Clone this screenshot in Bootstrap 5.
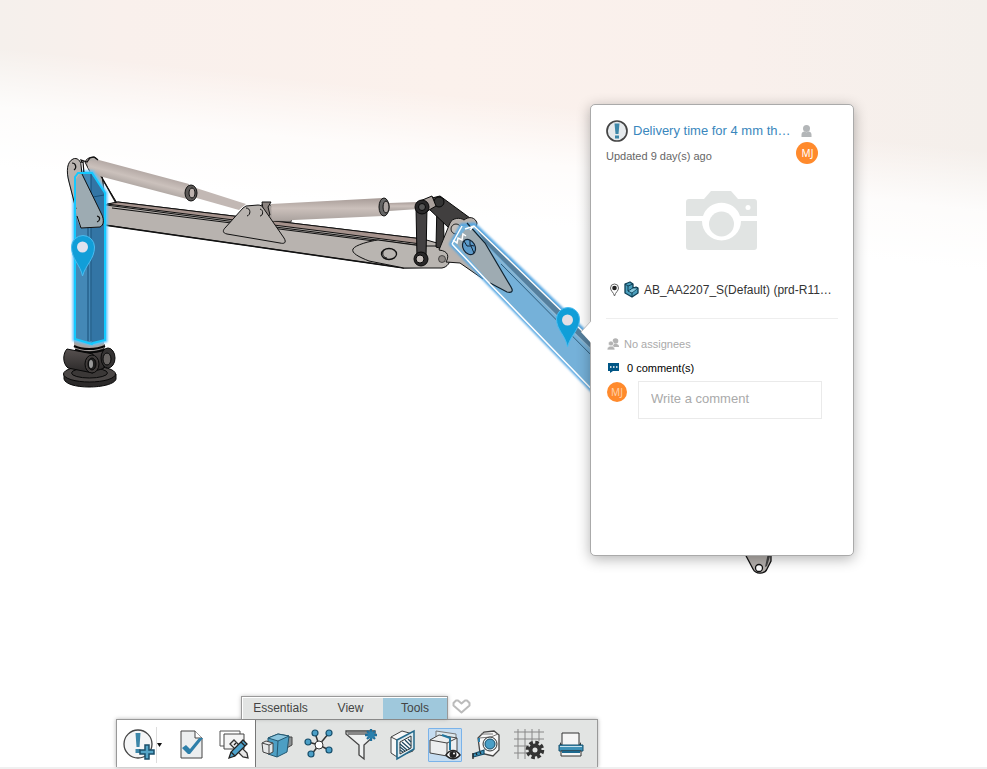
<!DOCTYPE html>
<html lang="en">
<head>
<meta charset="utf-8">
<meta name="viewport" content="width=device-width, initial-scale=1">
<title>Assembly review</title>
<link rel="stylesheet" href="https://cdn.jsdelivr.net/npm/bootstrap@5.3.0/dist/css/bootstrap.min.css">
<style>
  body { font-family: "Liberation Sans", Arial, sans-serif; font-size: 12px; line-height: 16px; color: #333; }
  .viewer { background: linear-gradient(186deg, transparent 150px, #fffc 210px, #fff 270px), linear-gradient(90deg, #f5f0ec 0, #f9f0ec 12%, #fbf1ec 45%, #f9f0ec 75%, #f4efeb 100%); overflow: hidden; }
  .scene { position: absolute; top: 0; left: 0; }
  svg { display: block; flex: none; }

  /* Issue pop-over, floating over the model */
  .issue { position: absolute; top: 104px; left: 590px; width: 264px; min-height: 452px; padding: 15px; border: 1px solid #aaa; border-radius: 5px; background: #fff; box-shadow: 0 3px 14px rgba(0,0,0,.3); }
  .issue-arrow { position: absolute; left: -11px; top: 215px; }
  .issue-title { font-size: 13px; color: #3a87bd; text-decoration: none; white-space: nowrap; }
  .people { width: 22px; margin-left: 6px; margin-right: 20px; padding-top: 4px; }
  .note { font-size: 11px; }
  .updated { margin-top: 6px; color: #666; }
  .avatar { width: 22px; height: 22px; background: #ff8a2c; color: #fff; font: 10px/22px "Noto Sans", sans-serif; text-align: center; }
  .avatar-sm { width: 20px; height: 20px; line-height: 20px; color: #ffd0a8; margin: 1px 11px 0 1px; }
  .photo { padding: 27px 0 31px; }
  .rule { width: 232px; border-top: 1px solid #eee; margin: 20px 0 17px; }
  .muted { color: #aaa; }
  .comment-box { width: 184px; height: 38px; padding: 0 12px 3px; border: 1px solid #eaeaea; border-radius: 0; font-size: 13px; color: #333; }
  .comment-box::placeholder { color: #aaa; }
  .comment-row { margin-top: 5px; }

  /* Action bar */
  .dock { padding-left: 116px; border-bottom: 2px solid #f0f0f0; }
  .tabs { margin-left: 125px; }
  .tab-set { border: 1px solid #999; border-bottom: 0; box-shadow: 0 0 4px rgba(0,0,0,.25); }
  .tab-set button { height: 22px; padding: 0 0 2px; border: 0; border-top: 1px solid #fff; background: #e2e4e3; color: #444; width: 65px; }
  .tab-set button:first-child { width: 76px; border-left: 1px solid #fff; }
  .tab-set button.active { width: 64px; background: #9fc8dc; }
  .fav { border: 0; background: none; padding: 0 0 2px 4px; }
  .tools { border: 1px solid #999; border-bottom: 0; height: 48px; width: 482px; background: #e2e4e3; box-shadow: 0 0 4px rgba(0,0,0,.3); }
  .tools > div { gap: 8px; padding: 2px 4px 0; }
  .tools .common { background: #fff; border-right: 1px solid #777; width: 139px; padding: 2px 3px 0 5px; }
  .tool { width: 34px; height: 34px; padding: 0; border: 1px solid transparent; border-radius: 1px; background: none; display: flex; align-items: center; justify-content: center; }
  .tool.active { background: #c5dcf0; border-color: #7ab3ea; }
  .more { width: 11px; height: 36px; padding: 0; border: 0; background: none; border-left: 1px solid #ddd; }
  .more svg { margin-left: -1px; }
</style>
<script src="https://cdn.jsdelivr.net/npm/bootstrap@5.3.0/dist/js/bootstrap.bundle.min.js"></script>
</head>
<body>
<main class="viewer position-relative min-vh-100 d-flex flex-column">

  <svg class="scene" width="987" height="600" viewBox="0 0 987 600" role="img" aria-label="Crane arm model">
    <defs>
      <linearGradient id="tube" x1="0" y1="0" x2="0" y2="1"><stop offset="0" stop-color="#a79b97"/><stop offset=".45" stop-color="#cbc0bb"/><stop offset="1" stop-color="#aaa29e"/></linearGradient>
      <linearGradient id="tubeA" gradientUnits="userSpaceOnUse" x1="147" y1="171" x2="142" y2="190"><stop offset="0" stop-color="#b0a5a1"/><stop offset=".5" stop-color="#cbc1bc"/><stop offset="1" stop-color="#a9a19d"/></linearGradient>
      <linearGradient id="base" x1="0" y1="0" x2="0" y2="1"><stop offset="0" stop-color="#575150"/><stop offset="1" stop-color="#292727"/></linearGradient>
      <filter id="glow" x="-20%" y="-20%" width="140%" height="140%"><feGaussianBlur stdDeviation="1.3"/></filter>
    </defs>

    <!-- pedestal -->
    <g stroke="#080808">
      <path d="M64 374v5c1 5 12 8 25 8s26-3 27-8v-5z" fill="#2c2a2a"/>
      <ellipse cx="89.500" cy="374" rx="26" ry="8" fill="#4b4746"/>
      <ellipse cx="89.500" cy="373" rx="18" ry="5" fill="#3b3837"/>
      <path d="M76 344h28v24c-8 4-20 4-28 0z" fill="url(#base)"/>
      <path d="M74 339l17 5 13-4v8c-8 4-22 4-30 0z" fill="#aaa5a3" stroke="none"/>
      <path d="M74 346c8 4 22 4 31 0M75 350c9 3 20 3 29 0" fill="none" stroke-width="2"/>
      <path d="M67 349l26 5v19l-25-5c-6-5-5-15-1-19z" fill="url(#base)"/>
      <ellipse cx="108" cy="358" rx="7" ry="10" fill="#343232"/><ellipse cx="107" cy="359" rx="4" ry="6" fill="#686462"/>
      <ellipse cx="92" cy="364" rx="7" ry="9" fill="#403c3b"/><ellipse cx="92" cy="364" rx="4" ry="6" fill="#1e1e1e"/><ellipse cx="91" cy="364" rx="2" ry="4" fill="#999" stroke="none"/>
    </g>

    <!-- main beam -->
    <g stroke="#111" stroke-linejoin="round">
      <path d="M103 180l14 23-14 4z" fill="#fff"/>
      <path d="M85 162c2-5 10-7 13-2l4 14 3 28z" fill="#b5afab"/>
      <path d="M105 205l13-3 305 37 21 6c8 7 8 18 0 22l-40 1-299-43z" fill="#b8b3af"/>
      <path d="M107 204l11-2 305 37-2 5-100-13-214-27z" fill="#a5928c"/>
      <path d="M106 205l130 17 188 24M112 208l310 39" fill="none"/>
      <path d="M104 225l300 43" fill="none" stroke-width="1.500"/>
      <path d="M422 246l-44-6c-8 1-23 5-25 9s6 8 16 12l35 7h38c11-2 11-18 2-22z" fill="#b9b5b1"/>
      <ellipse cx="389" cy="254" rx="7.500" ry="5.500" fill="#b9b5b1" stroke-width="1.300"/><path d="M384 250c-3 4 0 8 3 8" fill="none"/>
      <circle cx="442" cy="259" r="3.500" fill="#8e8986" stroke-width=".6"/>
      <path d="M101 176l15 27" fill="none" stroke-width="1.500"/>
    </g>

    <!-- cylinders -->
    <path d="M196 188l50 16-7 6-46-13z" fill="#c2b8b4"/>
    <path d="M88 161l11-1 90 24-2 15-88-23-11-8z" fill="url(#tubeA)"/>
    <g stroke="#111">
      <ellipse cx="191" cy="193" rx="6" ry="8" fill="#5c5957"/><ellipse cx="192" cy="193" rx="3" ry="5" fill="#bcb1ad"/>
      <path d="M261 205l8-2 5 7 18 8-1 4-33-2z" fill="#a69e9a" stroke-width=".7"/>
    </g>
    <path d="M389 203l30-1v7l-30 2z" fill="url(#tube)"/>
    <path d="M271 204l112-6v18l-111 5z" fill="url(#tube)"/>
    <g stroke="#111" stroke-linejoin="round">
      <ellipse cx="384" cy="207" rx="5" ry="9" fill="#666"/><ellipse cx="386" cy="207" rx="3" ry="6" fill="#aaa3a0"/>
      <path d="M262 202h9l-3 5 2 8-6 2z" fill="#8c8480"/>
      <path d="M246 206l12-1c3 0 4 1 6 4l20 29c3 5 0 6-4 5l-53-9c-5-1-4-4-2-6l18-20z" fill="#b8b3af"/>
      <path d="M246 208c5 0 5 7 1 8M260 209c4 1 3 7 0 7" fill="none"/>
    </g>

    <!-- linkage -->
    <g stroke="#080808">
      <path d="M437 202l-1 45 6 2 2-10-1-35z" fill="#3c3a3a"/>
      <path d="M432 198l8-2 30 22-7 9-14 1-21-20z" fill="#413f3f"/>
      <path d="M416 207h11l-1 51h-9z" fill="#434142"/>
      <circle cx="439" cy="202" r="5" fill="#333"/><path d="M420 201l12-5 4 10-12 7z" fill="#aaa19d"/>
      <circle cx="422" cy="207" r="7" fill="#292829"/><circle cx="422" cy="207" r="3.500" fill="#555"/>
      <circle cx="421" cy="259" r="7" fill="#292829"/><circle cx="420" cy="259" r="4" fill="#c7c0bc"/>
    </g>
    <path d="M439 250l11-27c2-5 10-6 14-3 5-4 11-3 13 3l-8 38 14 18-23-16-14-1c3-5 3-11-7-12z" fill="#b8b2ae" stroke="#111"/>
    <circle cx="456" cy="229" r="5" fill="#c4bfbb" stroke="#222"/>

    <!-- highlighted boom -->
    <path d="M452 244l10-18 12-1 130 126v51l-114-118z" fill="none" stroke="#55a6e2" stroke-width="5" filter="url(#glow)"/>
    <path d="M452 244l10-18 12-1 130 126v51l-114-118z" fill="#75b1d9"/>
    <path d="M474 225l130 126v12l-118-119z" fill="#557f9d"/>
    <path d="M479 240l125 122" stroke="#8db7d2" stroke-width="1.500"/>
    <path d="M501 264l103 104" stroke="#325e7c"/>
    <path d="M455 242l10-12 7-1 14 15 25 43c2 4 0 6-4 5l-17-9z" fill="#9eabb2"/>
    <path d="M467 223l18 20 26 44c3 5 0 6-4 5l-17-9" fill="none" stroke="#102330" stroke-width="1.200"/>
    <path d="M452 244l10-18M465 229l9-3 130 126M452 244l38 40 114 118M453 240l4 3 1-5 4 2 1-6 3 2M474 226l-4 4" fill="none" stroke="#fff" stroke-width="1.500"/>
    <ellipse cx="469" cy="247" rx="6" ry="8" transform="rotate(-30 469 247)" fill="#5c9bcb" stroke="#123" stroke-width="1.200"/>
    <path d="M464 241l3 5h4l3 7M470 240v5l4 1" fill="none" stroke="#123"/>

    <!-- highlighted column -->
    <path d="M78 173h14l13 20v147l-13 3-17-4V177z" fill="none" stroke="#5cc4ff" stroke-width="5" filter="url(#glow)"/>
    <path d="M78 173h14l13 20v147l-13 3-17-4V177z" fill="#4488b6"/>
    <path d="M91 173l14 20v147l-13 3z" fill="#3375a5"/>
    <path d="M88 220v121M91 173v168M93 197l11-2" stroke="#174f79"/>
    <path d="M73 159c4-2 8 2 8 6l2 12 19 38c2 5 2 10-2 12l-19 1c-3-5-4-9-5-15l-7-30c-3-11-3-21 4-24z" fill="#9dabb2"/>
    <path d="M73 159c4-2 8 2 8 6l-1 9-4 5v32l-6-29c-3-11-4-20 3-23z" fill="#b9b3af"/>
    <path d="M82 174l20 41c2 5 2 10-2 12l-19 1-4-12M76 209l-7-27c-3-11-2-20 4-23 4-2 8 2 8 6l1 9" fill="none" stroke="#111"/>
    <path d="M82 163l-1-3 6 2 3-4 4-1 4 3M83 161l1 13M72 163c4 0 5 5 2 7M97 216c4 1 3 5 0 6" fill="none" stroke="#111" stroke-width="1.200"/>
    <path d="M78 173h14l13 20v147l-12 3-1 1-17-5V177z" fill="none" stroke="#13c9ff" stroke-width="2"/>

    <!-- issue pins -->
    <g stroke="#4bbcf0">
      <path d="M82.500 276c-2-11-11-17-11-29a11.500 11.500 0 0 1 23 0c0 12-9 18-12 29z" fill="#119ed8"/>
      <path d="M567.500 347c-2-12-11-17-11-28a11.500 11.500 0 0 1 23 0c0 11-9 16-12 28z" fill="#119ed8"/>
    </g>
    <circle cx="82.500" cy="247" r="5.500" fill="#e1e2ee"/><circle cx="567.500" cy="320" r="5.500" fill="#e4dfe5"/>

    <!-- hook end -->
    <path d="M744 552l9 17c3 6 12 5 14 0l4-8v-9z" fill="#b5b0ad" stroke="#111" stroke-width="1.300"/>
    <path d="M768 553l-3 14 2-1 4-13z" fill="#444"/><circle cx="759" cy="568" r="3.500" fill="#fff" stroke="#111" stroke-width="1.300"/>
  </svg>

  <section class="issue" aria-label="Issue details">
    <svg class="issue-arrow" width="12" height="24" viewBox="0 0 12 24"><path d="M12 0L1 12l11 12z" fill="#fff"/><path d="M11 1L1 12" stroke="#bbb"/></svg>
    <div class="d-flex align-items-start">
      <div class="flex-grow-1">
        <div class="d-flex align-items-center gap-1">
          <svg width="23" height="22" viewBox="0 0 23 22"><circle cx="11" cy="11" r="10" fill="#e6eaed" stroke="#444" stroke-width="1.700"/><path d="M8.500 3.500h5l-1 10.500h-3zM9 15.500h4v3H9z" fill="#3d87a9"/></svg>
          <a href="#" class="issue-title">Delivery time for 4 mm th…</a>
        </div>
        <div class="note updated">Updated 9 day(s) ago</div>
      </div>
      <div class="people d-flex flex-column align-items-center gap-1">
        <svg width="20" height="14" viewBox="0 0 20 14"><circle cx="9.500" cy="4.500" r="3.500" fill="#b3b6b8"/><path d="M4.500 13v-2.500c0-2 1.500-3 3-3 1 1 3 1 4 0 1.500 0 3 1 3 3V13z" fill="#b3b6b8"/></svg>
        <span class="avatar rounded-circle">MJ</span>
      </div>
    </div>
    <div class="photo d-flex justify-content-center">
      <svg width="72" height="59" viewBox="0 0 72 59"><path fill="#e1e4e3" d="M3 8h15L25 0h20l7 8h16q3 0 3 3v14H54a19.500 19.500 0 0 0-37 0H0V11q0-3 3-3zM0 30h16a19.500 19.500 0 0 0 39 0h16v26q0 3-3 3H3q-3 0-3-3z"/><circle cx="35.500" cy="33" r="12.500" fill="#e1e4e3"/><circle cx="62" cy="16.500" r="2.500" fill="#fff"/></svg>
    </div>
    <div class="d-flex align-items-center">
      <svg class="ms-1" width="10" height="14" viewBox="0 0 10 14"><path d="M4.500 13C3.500 9 .5 8 .5 5a4 4 0 0 1 8 0c0 3-3 4-4 8z" fill="#fff" stroke="#666"/><circle cx="4.500" cy="5" r="2.300" fill="#222"/></svg>
      <svg class="ms-1" width="16" height="17" viewBox="0 0 16 17"><path d="M1 3l5-2 3 2v4l3-1 2 1v5l-6 4-7-4z" fill="#4b9fbd" stroke="#0f3f55" stroke-linejoin="round" stroke-width="1.300"/><path d="M1 3l3 2v5l4 2v4M4 5l5-2M4 10l5-3 5 0-6 5" fill="none" stroke="#0f3f55"/><path d="M5 10l4-2.500h4L8 11.500z" fill="#8cc8dc"/></svg>
      <span class="text-nowrap ms-1">AB_AA2207_S(Default) (prd-R11…</span>
    </div>
    <div class="rule"></div>
    <div class="note muted d-flex align-items-center gap-1">
      <svg width="14" height="12" viewBox="0 0 14 12" fill="#b3b3b3"><circle cx="9.500" cy="3" r="2.800"/><path d="M6 9c0-3 2-3 3.500-3S13 6 13 9z"/><g stroke="#fff" stroke-width=".7"><circle cx="5" cy="5.500" r="2.600"/><path d="M1 12c0-3 2-4 4-4s4 1 4 4z"/></g></svg>
      <span>No assignees</span>
    </div>
    <div class="note d-flex align-items-center gap-2 mt-2 text-black">
      <svg width="13" height="11" viewBox="-2 0 13 11"><path d="M0 0h11v8H5L2 10V8H0z" fill="#005686"/><path d="M2 4h7.500" stroke="#fff" stroke-width="1.500" stroke-dasharray="1.500"/></svg>
      <span>0 comment(s)</span>
    </div>
    <div class="comment-row d-flex align-items-start">
      <span class="avatar avatar-sm rounded-circle flex-shrink-0">MJ</span>
      <input class="comment-box" type="text" placeholder="Write a comment" aria-label="Write a comment">
    </div>
  </section>

  <footer class="dock mt-auto position-relative">
    <nav class="tabs d-flex align-items-center" aria-label="Action bar sections">
      <div class="tab-set d-flex">
        <button type="button">Essentials</button><button type="button">View</button><button type="button" class="active">Tools</button>
      </div>
      <button type="button" class="fav" aria-label="Favourite"><svg width="19" height="15" viewBox="0 0 19 15"><path d="M9.500 13.500L1.500 6.500V4L4 1.500h2L9.500 4.500 13 1.500h2L17.500 4v2.500z" fill="#fff" stroke="#bbb" stroke-width="2" stroke-linejoin="round"/></svg></button>
    </nav>
    <div class="tools d-flex" role="toolbar" aria-label="Tools">
      <div class="common d-flex align-items-center">
        <div class="d-flex align-items-center">
          <button type="button" class="tool" aria-label="New issue"><svg width="32" height="32" viewBox="0 0 32 32"><circle cx="15" cy="15" r="14" fill="#f4f5f6" stroke="#444" stroke-width="1.300"/><path d="M12.500 4h5l-1 14h-3zM12.500 20h5v4h-5z" fill="#3d87a9"/><path d="M22 16h4v5h5v4h-5v5h-4v-5h-5v-4h5z" fill="#55a5c7" stroke="#184d69" stroke-width="1.500"/></svg></button>
          <button type="button" class="more" aria-label="More"><svg width="8" height="6" viewBox="0 0 8 6"><path d="M1 1h5L3.500 5z" fill="#111"/></svg></button>
        </div>
        <button type="button" class="tool" aria-label="Approve"><svg width="30" height="32" viewBox="0 0 30 32"><path d="M4 2h14l7 7v20H4z" fill="#eceeef" stroke="#444"/><path d="M18 2v7h7" fill="#fff" stroke="#444"/><path d="M5 19l4-3 4 4 9-11h4L13 25h-2z" fill="#2e7fa9"/></svg></button>
        <button type="button" class="tool" aria-label="Markup"><svg width="32" height="32" viewBox="0 0 32 32"><path d="M2 2h20v15H2z" fill="#fff" stroke="#555"/><path d="M6 5h20v15H6z" fill="#f4f4f4" stroke="#444"/><path d="M12 15l4-4 13 13 1 5-5-1z" fill="#e8e8e8" stroke="#333" stroke-width="1.300"/><path d="M25 11l4 4-12 12-6 2 2-6z" fill="#4da3cd" stroke="#222" stroke-width="1.300"/><path d="M23 13l4 4M13 23l4 4M18 14l-2 2" stroke="#222" stroke-width="1.300"/></svg></button>
      </div>
      <div class="d-flex align-items-center">
        <button type="button" class="tool" aria-label="Move part"><svg width="32" height="32" viewBox="0 0 32 32" stroke="#444" stroke-linejoin="round"><path d="M24 8h7v8l-7 4z" fill="#8d9193"/><path d="M7 9l10-4 11 2-2 16-10 5-9-3z" fill="#4d9fc4" stroke="#24576f"/><path d="M7 9l10-4 11 2-11 5z" fill="#8bc5de" stroke="#24576f"/><path d="M17 12l-1 16" fill="none" stroke="#24576f"/><path d="M1 14l4-2 7 2v9l-4 2-6-2z" fill="#e5e7e8"/><path d="M1 14l7 2 4-2M8 16v9" fill="none"/></svg></button>
        <button type="button" class="tool" aria-label="Structure"><svg width="32" height="32" viewBox="0 0 32 32"><path d="M12 4l4 12L26 4M5 13l11 3 10 5M16 16L8 26" stroke="#333" stroke-width="1.500" fill="none"/><circle cx="16" cy="16" r="4" fill="#fff" stroke="#333"/><g fill="#4b9fc7" stroke="#174e6b" stroke-width="1.200"><circle cx="12" cy="4" r="3"/><circle cx="26" cy="4" r="3"/><circle cx="5" cy="13" r="3"/><circle cx="26" cy="21" r="3"/><circle cx="8" cy="25" r="3"/></g></svg></button>
        <button type="button" class="tool" aria-label="Filter"><svg width="32" height="32" viewBox="0 0 32 32"><path d="M1 2h29v4L19 16v14l-5-4V16L1 5z" fill="#eef0f0" stroke="#444" stroke-width="1.300"/><path d="M2 3h27v3H3z" fill="#888"/><path d="M26 0v12M20 6h12M22 2l8 8M30 2l-8 8" stroke="#1f6f9b" stroke-width="2.300"/><circle cx="26" cy="6" r="3.500" fill="#2b80ad"/></svg></button>
        <button type="button" class="tool" aria-label="Section"><svg width="32" height="32" viewBox="0 0 32 32"><path d="M4 8l11-6 11 3v17l-16 6-6-4z" fill="#f7f7f7" stroke="#444"/><path d="M4 8l6 3v17" fill="none" stroke="#444"/><path d="M10 11l17-9v18l-17 10z" fill="#ddebf1" stroke="#23698b" stroke-width="1.500"/><path d="M13 13l11-6v12l-11 6z" fill="#fff" stroke="#333"/><path d="M13 15l7 6M13 18l5 4M13 21l3 2M15 13l8 7M18 11l6 6M21 10l3 3" stroke="#214a61" stroke-width="1.300"/></svg></button>
        <button type="button" class="tool active" aria-label="Hide and show"><svg width="32" height="32" viewBox="0 0 32 32" stroke="#444"><path d="M7 2l20 3v14H7z" fill="#dce8ee" stroke="#777"/><path d="M1 11l9-5 18 3v13l-10 5-17-3z" fill="#eceeef"/><path d="M1 11l17 3 10-5M18 14v12" fill="none"/><path d="M13 6l8 3v12" fill="none" stroke="#23779f" stroke-width="2"/><path d="M17 26c4-6 10-6 14 0-4 5-10 5-14 0z" fill="#fff" stroke="#222" stroke-width="1.500"/><circle cx="24" cy="25.500" r="3.500" fill="#222" stroke="none"/><circle cx="25" cy="24.500" r="1" fill="#fff" stroke="none"/></svg></button>
        <button type="button" class="tool" aria-label="Measure"><svg width="32" height="32" viewBox="0 0 32 32"><path d="M7 9l6-6 10-1 5 4v15l-6 6-13-3z" fill="#f7f7f7" stroke="#444" stroke-width="1.300"/><path d="M8 9l12-1 7-3M10 5h12" stroke="#777" fill="none"/><circle cx="19" cy="15" r="7" fill="#e4eef2" stroke="#333"/><circle cx="19" cy="15" r="5" fill="#4a9fc7" stroke="#174e6b"/><path d="M13 21L2 25v3l11-3z" fill="#3c91b9" stroke="#174e6b" stroke-width="1.200"/><path d="M2 24v6M5 24l1 2M9 23l1 2" stroke="#222" stroke-width="1.300"/><path d="M8 9v4" stroke="#2c80aa" stroke-width="2"/></svg></button>
        <button type="button" class="tool" aria-label="Grid settings"><svg width="32" height="32" viewBox="0 0 32 32"><path d="M1 3h30M1 10h30M1 17h15M1 24h13M5 0v30M12 0v30M19 0v15M26 0v12" stroke="#888"/><circle cx="22" cy="21" r="7.500" fill="none" stroke="#333" stroke-width="3.500" stroke-dasharray="3.500 2.400"/><circle cx="22" cy="21" r="4.500" fill="#e2e4e3" stroke="#333" stroke-width="4"/></svg></button>
        <button type="button" class="tool" aria-label="Print"><svg width="28" height="28" viewBox="0 0 28 28"><path d="M5 2h17v13H5z" fill="#f5f5f5" stroke="#333"/><path d="M5 14h17l2-3v4H3v-4z" fill="#333"/><path d="M2 14h24v6H2z" fill="#3e91b7" stroke="#14506e"/><path d="M3 15.500h22" stroke="#c8e2ed"/><path d="M4 20h20v5H4z" fill="#f6f6f6" stroke="#333"/><path d="M5 20h18v2H5z" fill="#1c698f"/></svg></button>
      </div>
    </div>
  </footer>
</main>
</body>
</html>
